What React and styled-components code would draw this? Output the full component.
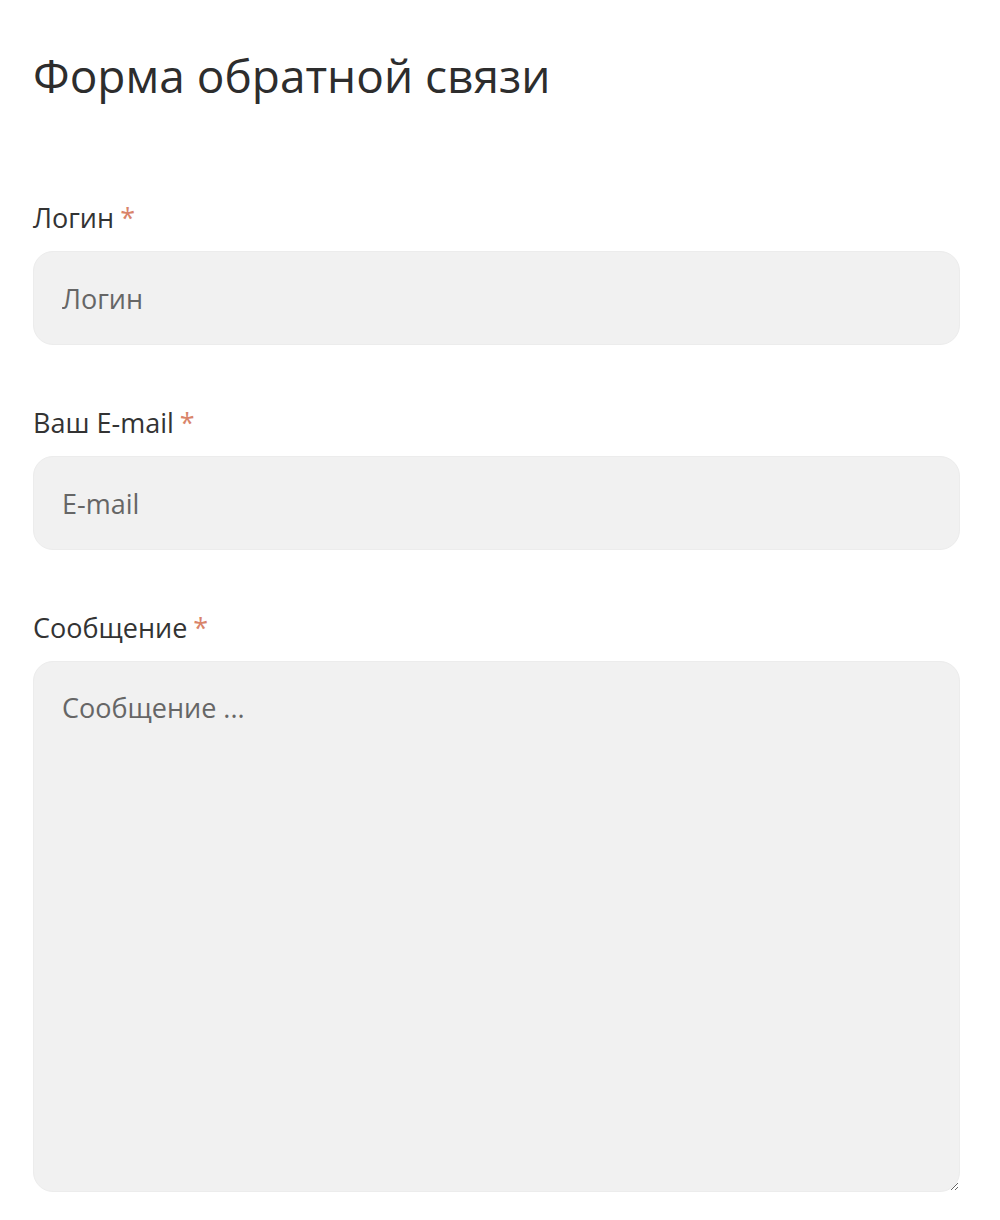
import styled, { createGlobalStyle } from "styled-components";

const GlobalStyle = createGlobalStyle`
	body {
		margin: 0;
		background: #ffffff;
		font-family: "Open Sans", "Noto Sans", sans-serif;
		color: #333333;
	}
`;

const FormWrapper = styled.form`
	width: 927px;
	padding: 45px 0 0 33px;
	display: flex;
	flex-direction: column;
`;

const Title = styled.h1`
	margin: 0 0 96px;
	font-size: 46px;
	font-weight: 400;
	line-height: 60px;
	color: #2d2d2d;
`;

const Field = styled.div`
	display: flex;
	flex-direction: column;
	margin-bottom: 61px;
`;

const Label = styled.label`
	font-size: 27px;
	line-height: 34px;
	margin-bottom: 16px;
	color: #333333;
`;

const Required = styled.span`
	color: #d9846a;
	margin-left: 6px;
`;

const Input = styled.input`
	box-sizing: border-box;
	height: 94px;
	width: 100%;
	padding: 0 28px;
	border: 1px solid #ececec;
	border-radius: 20px;
	background: #f1f1f1;
	font-family: inherit;
	font-size: 27px;
	color: #333333;
	outline: none;

	&::placeholder {
		color: #666666;
	}
`;

const TextArea = styled.textarea`
	box-sizing: border-box;
	height: 531px;
	width: 100%;
	padding: 28px 28px;
	border: 1px solid #ececec;
	border-radius: 20px;
	background: #f1f1f1;
	font-family: inherit;
	font-size: 27px;
	line-height: 36px;
	color: #333333;
	outline: none;

	&::placeholder {
		color: #666666;
	}
`;

export default function App() {
	return (
		<>
			<GlobalStyle />
			<FormWrapper>
				<Title>Форма обратной связи</Title>
				<Field>
					<Label>
						Логин<Required>*</Required>
					</Label>
					<Input placeholder="Логин" />
				</Field>
				<Field>
					<Label>
						Ваш E-mail<Required>*</Required>
					</Label>
					<Input placeholder="E-mail" />
				</Field>
				<Field>
					<Label>
						Сообщение<Required>*</Required>
					</Label>
					<TextArea placeholder="Сообщение ..." />
				</Field>
			</FormWrapper>
		</>
	);
}
